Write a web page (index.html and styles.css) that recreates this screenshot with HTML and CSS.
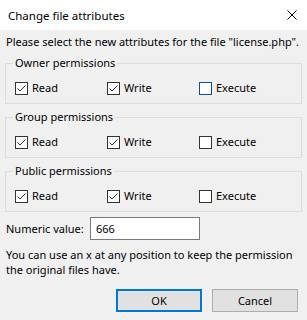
FILE: index.html
```html
<!DOCTYPE html>
<html lang="en">
<head>
    <meta charset="UTF-8">
    <title>Change file attributes</title>
    <link rel="stylesheet" href="styles.css">
</head>
<body>
    <div class="dialog">
        <div class="titlebar">
            <span class="title">Change file attributes</span>
            <svg class="close" width="10" height="10" viewBox="0 0 10 10">
                <path d="M0.5 0.5 L9.5 9.5 M9.5 0.5 L0.5 9.5" stroke="#000" stroke-width="1" fill="none"/>
            </svg>
        </div>

        <div class="content">
            <p class="prompt">Please select the new attributes for the file "license.php".</p>

            <fieldset class="group">
                <legend>Owner permissions</legend>
                <div class="row">
                    <label class="check"><span class="box"><svg width="11" height="11" viewBox="0 0 11 11"><path d="M1.5 5.5 L4 8 L9.5 2.5" stroke="#333" stroke-width="1" fill="none"/></svg></span>Read</label>
                    <label class="check"><span class="box"><svg width="11" height="11" viewBox="0 0 11 11"><path d="M1.5 5.5 L4 8 L9.5 2.5" stroke="#333" stroke-width="1" fill="none"/></svg></span>Write</label>
                    <label class="check"><span class="box hover"></span>Execute</label>
                </div>
            </fieldset>

            <fieldset class="group">
                <legend>Group permissions</legend>
                <div class="row">
                    <label class="check"><span class="box"><svg width="11" height="11" viewBox="0 0 11 11"><path d="M1.5 5.5 L4 8 L9.5 2.5" stroke="#333" stroke-width="1" fill="none"/></svg></span>Read</label>
                    <label class="check"><span class="box"><svg width="11" height="11" viewBox="0 0 11 11"><path d="M1.5 5.5 L4 8 L9.5 2.5" stroke="#333" stroke-width="1" fill="none"/></svg></span>Write</label>
                    <label class="check"><span class="box"></span>Execute</label>
                </div>
            </fieldset>

            <fieldset class="group">
                <legend>Public permissions</legend>
                <div class="row">
                    <label class="check"><span class="box"><svg width="11" height="11" viewBox="0 0 11 11"><path d="M1.5 5.5 L4 8 L9.5 2.5" stroke="#333" stroke-width="1" fill="none"/></svg></span>Read</label>
                    <label class="check"><span class="box"><svg width="11" height="11" viewBox="0 0 11 11"><path d="M1.5 5.5 L4 8 L9.5 2.5" stroke="#333" stroke-width="1" fill="none"/></svg></span>Write</label>
                    <label class="check"><span class="box"></span>Execute</label>
                </div>
            </fieldset>

            <div class="numeric">
                <label for="numeric">Numeric value:</label>
                <input type="text" id="numeric" value="666">
            </div>

            <p class="help">You can use an x at any position to keep the permission<br>the original files have.</p>

            <div class="buttons">
                <button class="btn default">OK</button>
                <button class="btn">Cancel</button>
            </div>
        </div>
    </div>
</body>
</html>
```

FILE: styles.css
```css
body {
    margin: 0;
    padding: 0;
    font-family: "Noto Sans", sans-serif;
    font-size: 11px;
    color: #000;
    background: #f0f0f0;
}
.dialog {
    width: 307px;
    height: 320px;
    background: #f0f0f0;
}
/* window caption */
.titlebar {
    height: 30px;
    background: #fff;
    display: flex;
    align-items: center;
    justify-content: space-between;
    padding: 0 10px 0 8px;
}
.title {
    font-size: 11.5px;
}
.content {
    padding: 4px 5px 0 5px;
}
.prompt {
    margin: 0;
    line-height: 16px;
    padding-left: 1px;
    white-space: nowrap;
}
/* group boxes */
fieldset.group {
    margin: 5px 0 0 0;
    padding: 9px 0 7px 9px;
    border: 1px solid #dcdcdc;
    min-width: 0;
}
fieldset.group legend {
    padding: 0 2px;
    margin-left: -2px;
    line-height: 16px;
}
.row {
    display: grid;
    grid-template-columns: 92px 92px 92px;
    line-height: 16px;
}
.check {
    display: flex;
    align-items: center;
    gap: 4px;
}
.box {
    width: 11px;
    height: 11px;
    border: 1px solid #333;
    background: #fff;
    display: inline-flex;
}
.box.hover {
    border-color: #005499;
}
/* numeric value row */
.numeric {
    display: flex;
    align-items: center;
    margin-top: 5px;
    padding-left: 1px;
}
.numeric label {
    width: 84px;
    white-space: nowrap;
}
.numeric input {
    width: 110px;
    height: 23px;
    box-sizing: border-box;
    border: 1px solid #7a7a7a;
    background: #fff;
    padding: 0 5px;
    font-family: inherit;
    font-size: 11px;
    outline: none;
}
.help {
    margin: 7px 0 0 0;
    line-height: 15px;
    padding-left: 1px;
    white-space: nowrap;
}
.buttons {
    display: flex;
    justify-content: flex-end;
    gap: 10px;
    margin-top: 12px;
    padding-right: 4px;
}
.btn {
    width: 86px;
    height: 23px;
    box-sizing: border-box;
    background: #e1e1e1;
    border: 1px solid #adadad;
    font-family: inherit;
    font-size: 11px;
    color: #000;
    padding: 0;
}
.btn.default {
    border: 2px solid #0078d7;
}
```
